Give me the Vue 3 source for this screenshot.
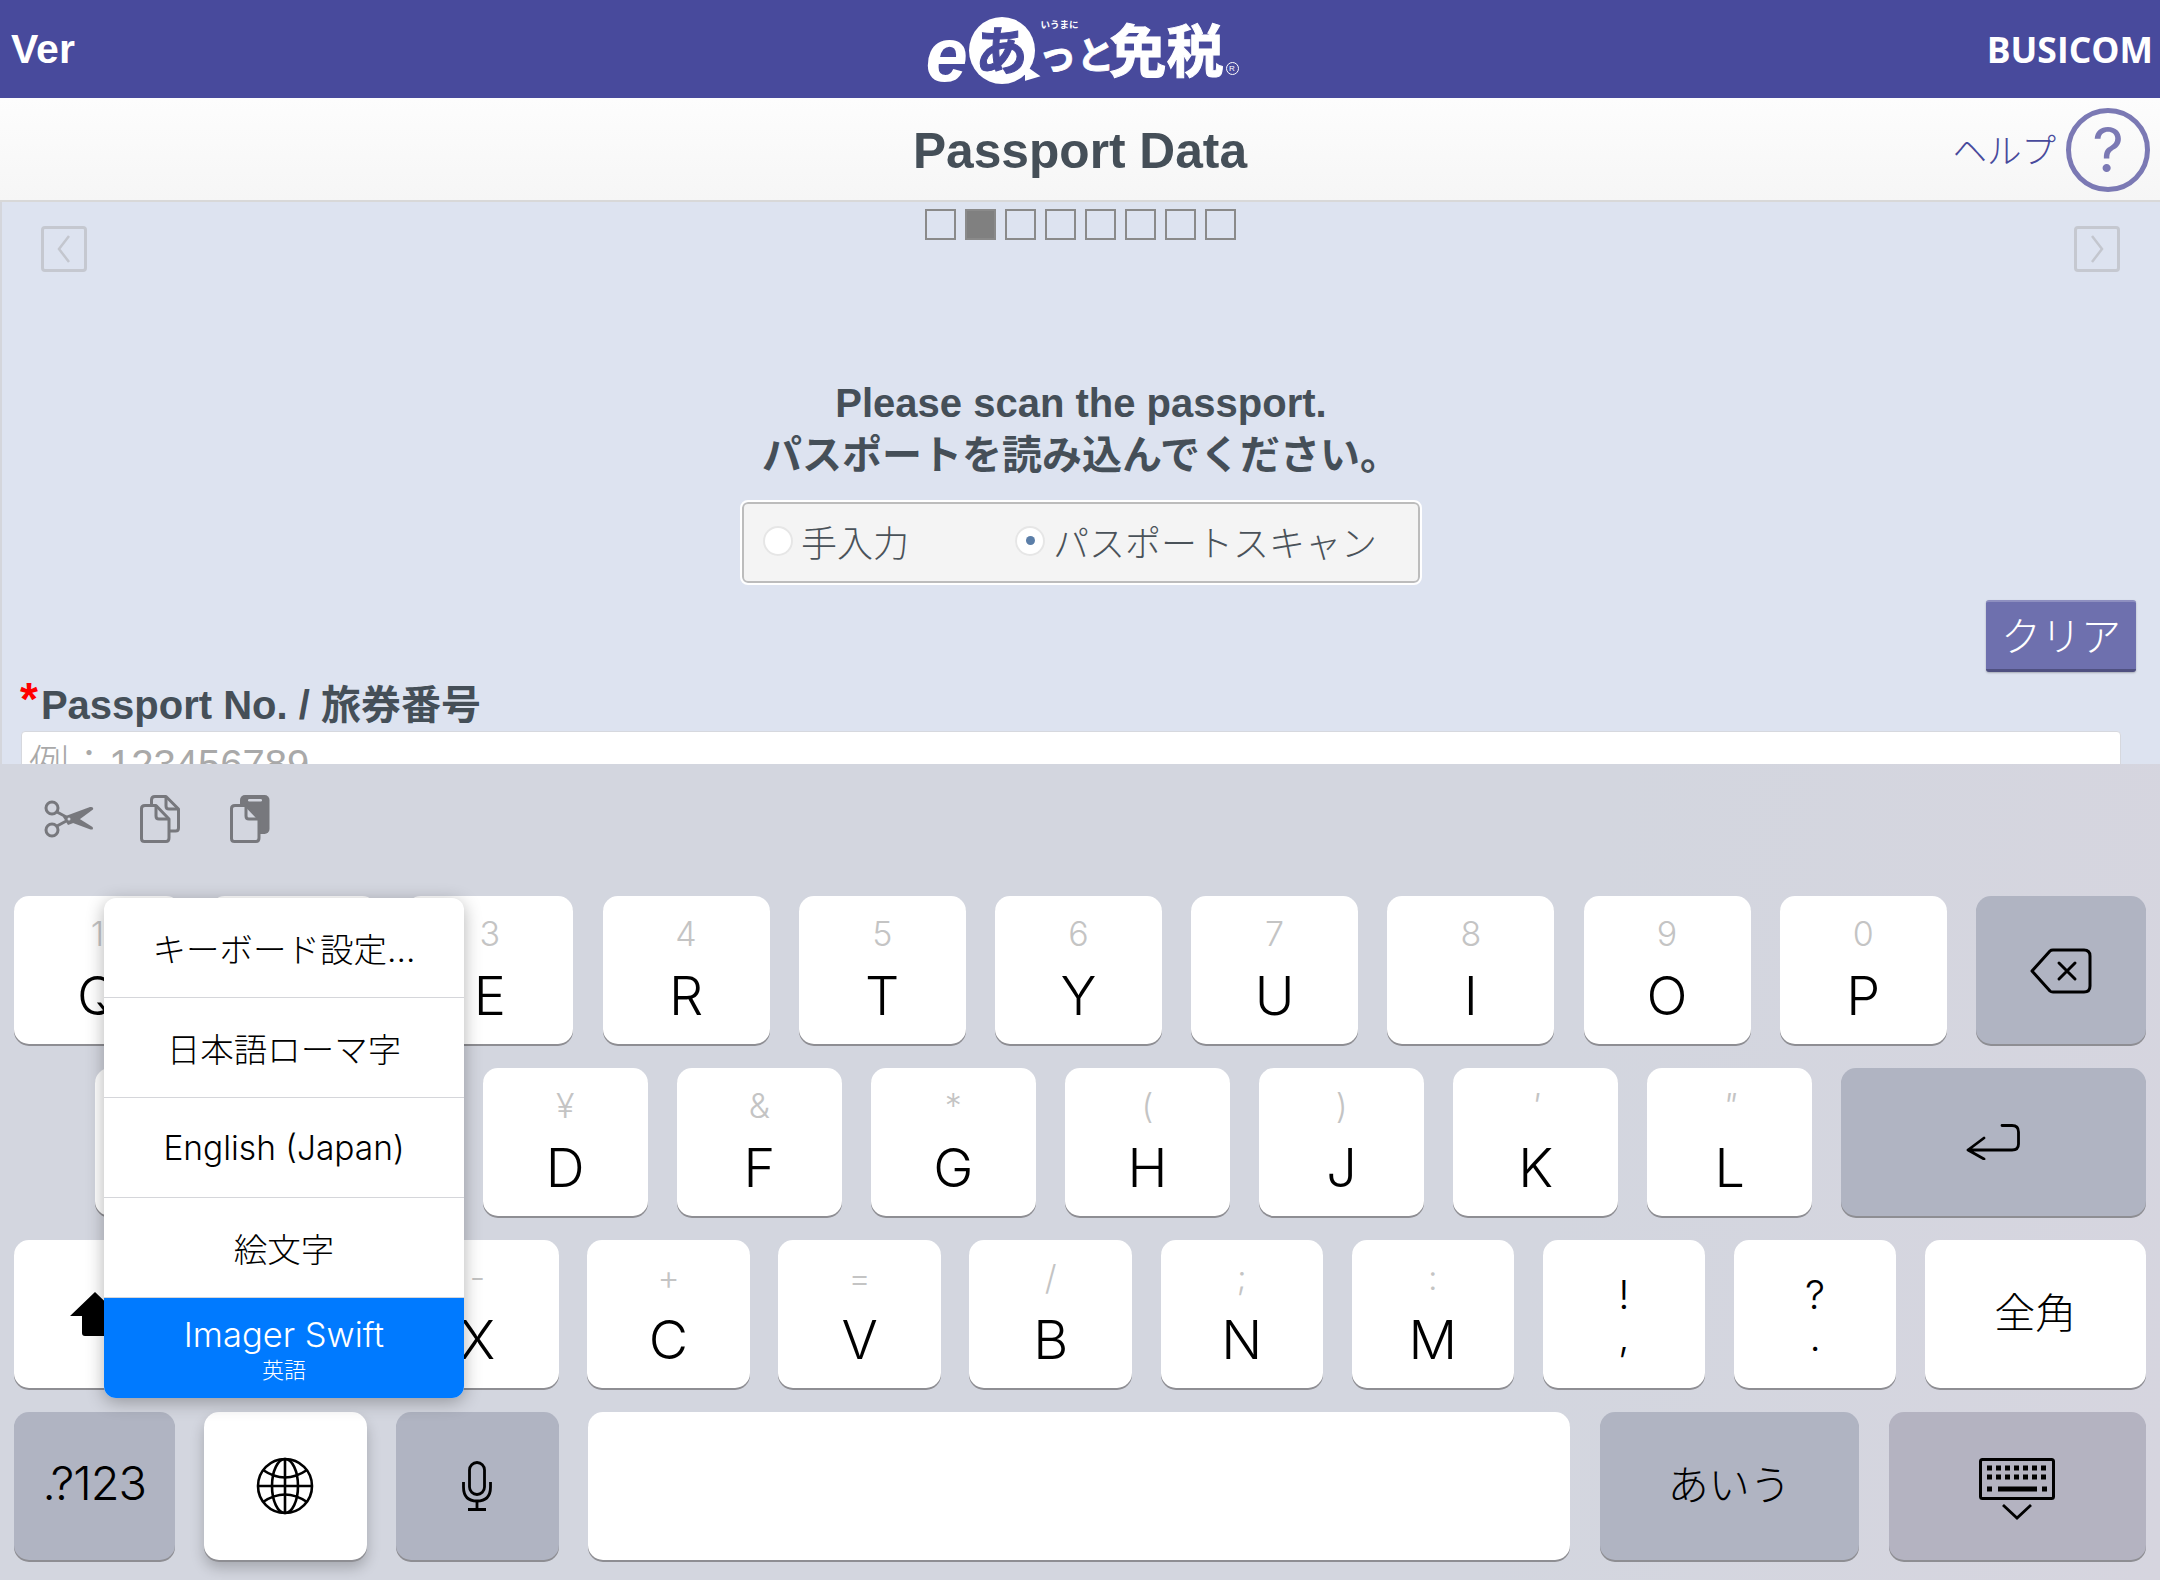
<template>
  <div class="screen">
    <header class="topbar">
      <div class="ver">Ver</div>
      <div class="logo">
        <span class="logo-e">e</span>
        <span class="logo-bubble">あ</span>
        <span class="logo-stack">
          <small>いうまに</small>
          <span class="logo-tsuto"><i>っ</i>と</span>
        </span>
        <span class="logo-main">免税</span>
        <span class="logo-r">R</span>
      </div>
      <div class="brand">BUSICOM</div>
    </header>

    <div class="titlebar">
      <h1>Passport Data</h1>
      <div class="help">
        <span class="help-text">ヘルプ</span>
        <span class="help-circle">?</span>
      </div>
    </div>

    <main class="content">
      <div class="nav-row">
        <button class="nav-btn">
          <svg width="20" height="32" viewBox="0 0 20 32"><path d="M15 3 L5 16 L15 29" fill="none" stroke="#c3c6ce" stroke-width="2.5" /></svg>
        </button>
        <div class="pager">
          <span v-for="n in 8" :key="n" class="page" :class="{ on: n === 2 }"></span>
        </div>
        <button class="nav-btn">
          <svg width="20" height="32" viewBox="0 0 20 32"><path d="M5 3 L15 16 L5 29" fill="none" stroke="#c3c6ce" stroke-width="2.5" /></svg>
        </button>
      </div>

      <p class="prompt">Please scan the passport.<br />パスポートを読み込んでください。</p>

      <div class="radio-box">
        <label class="radio r1"><span class="dot"></span>手入力</label>
        <label class="radio"><span class="dot checked"></span>パスポートスキャン</label>
      </div>

      <div class="actions">
        <button class="clear">クリア</button>
      </div>

      <div class="field-label"><span class="req">*</span>Passport No. / 旅券番号</div>
      <div class="input">例：123456789</div>
    </main>

    <section class="keyboard">
      <div class="toolbar">
        <!-- cut -->
        <svg class="tb-cut" width="50" height="38" viewBox="0 0 50 38">
          <circle cx="8" cy="8" r="6" fill="none" stroke="#77787d" stroke-width="3" />
          <circle cx="8" cy="30" r="6" fill="none" stroke="#77787d" stroke-width="3" />
          <path d="M13 12 L26 19 M13 26 L26 19" stroke="#77787d" stroke-width="3" />
          <path d="M19 17 L46 7 Q50 6.500 49 9.500 L32 22 L24 25 Z" fill="#77787d" />
          <path d="M31 16 L48.500 27 Q50 30 46.500 29.500 L29 23 Z" fill="#77787d" />
          <circle cx="25" cy="19" r="1.500" fill="#d3d6df" />
        </svg>
        <!-- copy -->
        <svg class="tb-copy" width="40" height="48" viewBox="0 0 40 48">
          <g fill="none" stroke="#77787d" stroke-width="3" stroke-linejoin="round">
            <path d="M11.5 10 V5 Q11.5 1.5 15 1.5 H26 L38.5 14 V33 Q38.5 36 35.5 36 H29" />
            <path d="M26 2 V11 Q26 14 29 14 H38" />
            <path d="M5 10.5 H16 L29 24 V43 Q29 46.5 26 46.5 H4.5 Q1.5 46.5 1.5 43.5 V13.5 Q1.5 10.5 5 10.5 Z" />
            <path d="M16 10.5 V21 Q16 24 19 24 H29" />
          </g>
        </svg>
        <!-- paste -->
        <svg class="tb-paste" width="40" height="48" viewBox="0 0 40 48">
          <rect x="10" y="0" width="29.500" height="39" rx="5" fill="#77787d" />
          <rect x="18" y="4" width="14" height="2.500" rx="1.200" fill="#d3d6df" />
          <path d="M5 10.5 H16 L29 24 V43 Q29 46.5 26 46.5 H4.5 Q1.5 46.5 1.5 43.5 V13.5 Q1.5 10.5 5 10.5 Z" fill="#d3d6df" stroke="#77787d" stroke-width="3" stroke-linejoin="round" />
          <path d="M16 10.5 V21 Q16 24 19 24 H29" fill="none" stroke="#77787d" stroke-width="3" />
        </svg>
      </div>

      <div class="rows">
        <div class="row row1">
          <div v-for="k in row1" :key="k[0]" class="key">
            <span class="sub">{{ k[1] }}</span><span class="main">{{ k[0] }}</span>
          </div>
          <div class="key dark grow">
            <svg class="del-icon" width="62" height="46" viewBox="0 0 62 46">
              <path d="M2 23 L20 3 Q21 2 23 2 H54 Q60 2 60 8 V38 Q60 44 54 44 H23 Q21 44 20 43 Z" fill="none" stroke="#000" stroke-width="3" stroke-linejoin="round" />
              <path d="M29 15 L45 31 M45 15 L29 31" stroke="#000" stroke-width="3" stroke-linecap="round" />
            </svg>
          </div>
        </div>

        <div class="row row2">
          <div v-for="k in row2" :key="k[0]" class="key">
            <span class="sub" :class="{ tick: k[2] }">{{ k[1] }}</span><span class="main">{{ k[0] }}</span>
          </div>
          <div class="key dark grow">
            <svg class="return-icon" width="54" height="36" viewBox="0 0 54 36">
              <path d="M36 1.500 H46 Q52.500 1.500 52.500 8 V20 Q52.500 26 46 26 H2 M18 14 L2 26 L18 35" fill="none" stroke="#000" stroke-width="2.800" stroke-linejoin="round" stroke-linecap="round" />
            </svg>
          </div>
        </div>

        <div class="row row3">
          <div class="key">
            <svg width="50" height="44" viewBox="0 0 50 44"><path d="M25 0 L50 24 H38 V41 Q38 44 35 44 H15 Q12 44 12 41 V24 H0 Z" fill="#000" /></svg>
          </div>
          <div v-for="k in row3" :key="k[0]" class="key">
            <span class="sub">{{ k[1] }}</span><span class="main">{{ k[0] }}</span>
          </div>
          <div v-for="k in punct" :key="k[0]" class="key punct">
            <span>{{ k[0] }}</span><span>{{ k[1] }}</span>
          </div>
          <div class="key grow text-key">全角</div>
        </div>

        <div class="row row4">
          <div class="key dark text-key w-num"><span class="num">.?123</span></div>
          <div class="key w-mid globe-key">
            <svg width="58" height="58" viewBox="0 0 58 58">
              <g fill="none" stroke="#000" stroke-width="2.600">
                <circle cx="29" cy="29" r="27" />
                <ellipse cx="29" cy="29" rx="13" ry="27" />
                <path d="M29 2 V56 M2 29 H56" />
                <path d="M7 13 Q29 28 51 13 M7 45 Q29 30 51 45" />
              </g>
            </svg>
          </div>
          <div class="key dark w-mid">
            <svg width="30" height="50" viewBox="0 0 30 50">
              <g fill="none" stroke="#000" stroke-width="2.800">
                <rect x="7.500" y="1.500" width="15" height="32" rx="7.500" />
                <path d="M1.500 21 V26 Q1.500 40 15 40 Q28.500 40 28.500 26 V21" />
                <path d="M15 40 V48 M6 48.500 H24" />
              </g>
            </svg>
          </div>
          <div class="key w-space"></div>
          <div class="key dark text-key w-kana">あいう</div>
          <div class="key dark2 grow">
            <svg class="kbd-icon" width="76" height="62" viewBox="0 0 76 62">
              <rect x="1.500" y="1.500" width="73" height="39" rx="2" fill="none" stroke="#000" stroke-width="3" />
              <path d="M8 10 H68 M8 19 H68" stroke="#000" stroke-width="5" stroke-dasharray="5 4" fill="none" />
              <path d="M8 31 H13 M19 31 H58 M63 31 H68" stroke="#000" stroke-width="5" fill="none" />
              <path d="M24 47 L38 60 L52 47" fill="none" stroke="#000" stroke-width="2.800" />
            </svg>
          </div>
        </div>
      </div>

      <div class="menu">
        <div class="item">キーボード設定...</div>
        <div class="item">日本語ローマ字</div>
        <div class="item">English (Japan)</div>
        <div class="item">絵文字</div>
        <div class="item active">
          <span>Imager Swift</span>
          <small>英語</small>
        </div>
      </div>
    </section>
  </div>
</template>

<script setup>
const row1 = [['Q', '1'], ['W', '2'], ['E', '3'], ['R', '4'], ['T', '5'], ['Y', '6'], ['U', '7'], ['I', '8'], ['O', '9'], ['P', '0']]
const row2 = [['A', '@'], ['S', '#'], ['D', '¥'], ['F', '&'], ['G', '*'], ['H', '('], ['J', ')'], ['K', "'", true], ['L', '"', true]]
const row3 = [['Z', '%'], ['X', '-'], ['C', '+'], ['V', '='], ['B', '/'], ['N', ';'], ['M', ':']]
const punct = [['!', ','], ['?', '.']]
</script>

<style>
html, body {
  margin: 0;
  background: #d3d6df;
}
</style>

<style scoped>
.screen {
  width: 2160px;
  height: 1580px;
  display: flex;
  flex-direction: column;
  overflow: hidden;
  position: relative;
  font-family: "Liberation Sans", "Noto Sans CJK JP", sans-serif;
}

.topbar {
  height: 98px;
  flex: none;
  background: #484a9c;
  color: #fff;
  display: grid;
  grid-template-columns: 1fr auto 1fr;
  align-items: center;
  padding: 0 7px 0 11px;
}
.ver {
  font-size: 41px;
  font-weight: 700;
}
.brand {
  justify-self: end;
  font-family: "Open Sans", sans-serif;
  font-size: 35.500px;
  font-weight: 700;
}

.logo {
  display: flex;
  align-items: flex-end;
  height: 70px;
  font-family: "Noto Sans CJK JP", sans-serif;
  font-weight: 700;
}
.logo-e {
  font-family: "Liberation Sans", sans-serif;
  font-style: italic;
  font-size: 76px;
  line-height: 70px;
  width: 42px;
  height: 72px;
  transform: translateY(8px);
}
.logo-bubble {
  position: relative;
  width: 66px;
  height: 67px;
  margin: 0 6px 0 1px;
  border-radius: 50%;
  background: #fff;
  color: #484a9c;
  font-size: 52px;
  line-height: 62px;
  text-align: center;
  -webkit-text-stroke: 1px #484a9c;
}
.logo-bubble::after {
  content: "";
  position: absolute;
  right: -6px;
  bottom: 3px;
  width: 16px;
  height: 16px;
  background: #fff;
  clip-path: polygon(0 0, 100% 70%, 0 100%);
}
.logo-stack {
  display: flex;
  flex-direction: column;
  width: 69px;
  height: 60px;
  margin-bottom: 6px;
}
.logo-stack small {
  font-size: 9.500px;
  line-height: 12px;
}
.logo-tsuto {
  margin-left: -2px;
  font-size: 38px;
  line-height: 46px;
  white-space: nowrap;
  -webkit-text-stroke: 0.8px #fff;
}
.logo-tsuto i {
  font-style: normal;
}
.logo-main {
  font-size: 57px;
  line-height: 62px;
  margin-bottom: 6px;
  white-space: nowrap;
  -webkit-text-stroke: 1px #fff;
}
.logo-r {
  width: 11px;
  height: 11px;
  margin: 0 0 9px 2px;
  border: 1px solid #fff;
  border-radius: 50%;
  font: 8px/11px "Liberation Sans", sans-serif;
  text-align: center;
}

.titlebar {
  height: 104px;
  flex: none;
  box-sizing: border-box;
  background: linear-gradient(#fdfdfd, #f6f6f6);
  border-bottom: 2px solid #d8d8d8;
  display: flex;
  align-items: center;
  justify-content: center;
  position: relative;
}
.titlebar h1 {
  margin: 4px 0 0;
  font-size: 49.700px;
  font-weight: 700;
  color: #454f58;
}
.help {
  position: absolute;
  right: 10px;
  top: 10px;
  display: flex;
  align-items: center;
  gap: 10px;
  color: #484a9c;
  font-family: "Noto Sans CJK JP", sans-serif;
  font-weight: 300;
  font-size: 34.500px;
}
.help-text {
  padding-bottom: 4px;
}
.help-circle {
  box-sizing: border-box;
  width: 84px;
  height: 84px;
  border: 5px solid #7b79b4;
  border-radius: 50%;
  color: #7b79b4;
  font: 400 62px/74px "Inter", sans-serif;
  text-align: center;
}

.content {
  flex: 1;
  min-height: 0;
  overflow: hidden;
  box-sizing: border-box;
  background: #dde3f0;
  border-left: 2px solid #d4d6dc;
  display: flex;
  flex-direction: column;
  color: #454f58;
}
.content > * {
  flex: none;
}
.nav-row {
  height: 175px;
  display: flex;
  justify-content: space-between;
  padding: 0 40px 0 39px;
}
.nav-btn {
  box-sizing: border-box;
  width: 46px;
  height: 46px;
  margin-top: 24px;
  padding: 0;
  background: transparent;
  border: 3px solid #c5c8d0;
  border-radius: 4px;
  display: flex;
  align-items: center;
  justify-content: center;
}
.pager {
  display: flex;
  gap: 9px;
  margin: 7px 0 0 -1px;
  height: 31px;
}
.page {
  box-sizing: border-box;
  width: 31px;
  height: 31px;
  border: 2px solid #8a8a8a;
}
.page.on {
  background: #808080;
}

.prompt {
  margin: 0;
  font-size: 40px;
  font-weight: 700;
  line-height: 52px;
  text-align: center;
}

.radio-box {
  box-sizing: border-box;
  width: 678px;
  height: 81px;
  margin: 21px auto 0;
  padding: 0 0 4px 19px;
  background: #f4f4f4;
  border: 2px solid #bcbcbc;
  outline: 2px solid #fff;
  border-radius: 6px;
  display: flex;
  align-items: center;
  font-family: "Noto Sans CJK JP", sans-serif;
  font-weight: 300;
  font-size: 36px;
  color: #4a5259;
}
.radio {
  display: flex;
  align-items: center;
  gap: 8px;
}
.radio.r1 {
  width: 252px;
}
.dot {
  box-sizing: border-box;
  width: 30px;
  height: 30px;
  border: 2px solid #e6e6e6;
  border-radius: 50%;
  background: #fff;
  display: flex;
  align-items: center;
  justify-content: center;
}
.dot.checked::after {
  content: "";
  width: 9px;
  height: 9px;
  border-radius: 50%;
  background: #5b7ea8;
}

.actions {
  display: flex;
  justify-content: flex-end;
  padding-right: 24px;
  margin-top: 17px;
}
.clear {
  box-sizing: border-box;
  width: 150px;
  height: 72px;
  padding: 0 0 4px;
  background: #6e70ae;
  border: 0;
  border-top: 2px solid #8e8fc0;
  border-bottom: 3px solid #4f5080;
  border-radius: 3px;
  box-shadow: 0 1px 2px rgba(0, 0, 0, 0.25);
  color: #fff;
  font-family: "Noto Sans CJK JP", sans-serif;
  font-weight: 300;
  font-size: 40px;
}

.field-label {
  margin: 6px 0 0 18px;
  height: 52px;
  font-size: 40px;
  line-height: 54px;
  font-weight: 700;
  white-space: nowrap;
}
.req {
  color: #ff0000;
  position: relative;
  top: -4px;
  margin-right: 3px;
  font-size: 46px;
  line-height: 40px;
}
.input {
  box-sizing: border-box;
  margin: 1px 39px 0 19px;
  height: 70px;
  padding-left: 7px;
  background: #fff;
  border: 1px solid #d6d8de;
  border-radius: 4px;
  color: #a9a9a9;
  font-weight: 300;
  font-size: 40px;
  line-height: 64px;
}

.keyboard {
  height: 816px;
  flex: none;
  box-sizing: border-box;
  position: relative;
  background: linear-gradient(100deg, #d3d6df 70%, #d6d5df);
  font-family: "Inter", "Noto Sans CJK JP", sans-serif;
  font-weight: 300;
  color: #000;
}
.toolbar {
  height: 132px;
  position: relative;
  display: flex;
  align-items: flex-start;
  padding: 31px 0 0 44px;
  box-sizing: border-box;
}
.tb-cut {
  margin-top: 5px;
}
.tb-copy {
  margin-left: 46px;
}
.tb-paste {
  margin-left: 50px;
}

.rows {
  display: flex;
  flex-direction: column;
  gap: 24px;
  padding: 0 14.500px 0 14px;
}
.row {
  display: flex;
  height: 148px;
}
.row1 { gap: 29.200px; }
.row1 .key { width: 167px; }
.row2 { gap: 29.100px; padding-left: 80.500px; }
.row2 .key { width: 165px; }
.row3 { gap: 28.600px; }
.row3 .key { width: 162.500px; }
.row4 { gap: 29.500px; }
.row .key.grow { width: auto; flex: 1; }
.w-num { width: 160.500px; }
.w-mid { width: 162.500px; }
.w-space { width: 982px; }
.w-kana { width: 259.500px; }

.key {
  flex: none;
  box-sizing: border-box;
  background: #fff;
  border-radius: 15px;
  box-shadow: 0 2px 0 #8e8e93;
  display: flex;
  flex-direction: column;
  align-items: center;
  justify-content: center;
}
.key:has(.sub) {
  justify-content: flex-start;
  padding-top: 14px;
}
.key.dark {
  background: #b0b4c2;
}
.key.dark2 {
  background: #b4b3c1;
}
.sub {
  height: 48px;
  font-size: 34px;
  line-height: 48px;
  color: #c4c4c4;
}
.sub.tick {
  font-style: italic;
}
.main {
  height: 76px;
  font-size: 54px;
  line-height: 76px;
}
.punct {
  font-size: 40px;
  line-height: 42px;
  padding-top: 4px;
}
.text-key {
  font-size: 41px;
  padding-bottom: 8px;
}
.num {
  font-size: 47px;
  letter-spacing: -1px;
}
.globe-key {
  box-shadow: 0 2px 0 #8e8e93, 0 8px 14px rgba(0, 0, 0, 0.22);
}
.del-icon {
  margin-top: 2px;
}
.return-icon {
  margin-top: -1px;
}
.kbd-icon {
  margin-top: 5px;
}

.menu {
  position: absolute;
  left: 104px;
  top: 134px;
  width: 360px;
  height: 500px;
  border-radius: 12px;
  overflow: hidden;
  background: #fff;
  box-shadow: 0 4px 18px rgba(0, 0, 0, 0.3);
  font-size: 33.500px;
  font-weight: 300;
}
.item {
  box-sizing: border-box;
  height: 100px;
  border-bottom: 1px solid #d5d6da;
  display: flex;
  flex-direction: column;
  align-items: center;
  justify-content: center;
}
.item.active {
  border-bottom: 0;
  background: #007aff;
  color: #fff;
}
.item.active span {
  font-size: 34.500px;
  line-height: 42px;
  margin-top: 2px;
}
.item.active small {
  font-size: 22px;
  line-height: 28px;
}
</style>
